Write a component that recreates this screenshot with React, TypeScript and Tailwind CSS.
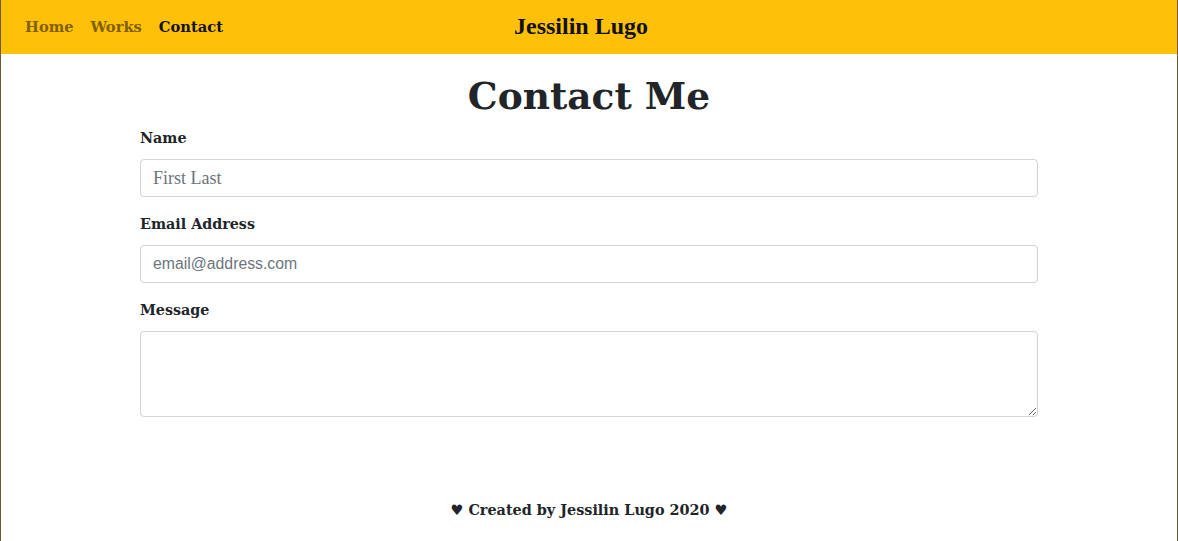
import React from "react";

const serif = { fontFamily: '"DejaVu Serif", "Liberation Serif", serif' };

export default function App() {
  return (
    <div className="min-h-[541px] bg-white border-x border-[#6f5a30] flex flex-col" style={serif}>
      <nav className="h-[54px] bg-[#ffc107] flex items-center px-[24px] relative">
        <div className="flex items-center gap-[17px] text-[14.7px] font-bold">
          <a className="text-[#806000]">Home</a>
          <a className="text-[#806000]">Works</a>
          <a className="text-[#111]">Contact</a>
        </div>
        <div
          className="absolute left-[calc(50%-8px)] -translate-x-1/2 top-[11px] text-[24px] leading-[30px] font-bold text-[#111]"
          style={{ fontFamily: '"Liberation Serif", "DejaVu Serif", serif' }}
        >
          Jessilin Lugo
        </div>
      </nav>
      <main className="flex-1 flex flex-col items-center">
        <h1 className="text-[37.5px] font-bold text-[#212529] leading-[48px] pt-[18px]">Contact Me</h1>
        <form className="w-[898px] flex flex-col">
          <label className="text-[14.3px] font-bold text-[#212529] mt-[7px] leading-[22px]">Name</label>
          <input
            className="mt-[10px] h-[38px] border border-[#ced4da] rounded-[4px] px-[12px] text-[18px] placeholder:text-[#6c757d] outline-none"
            style={{ fontFamily: '"Liberation Serif", serif' }}
            placeholder="First Last"
          />
          <label className="text-[14.3px] font-bold text-[#212529] mt-[16px] leading-[22px]">Email Address</label>
          <input
            className="mt-[10px] h-[38px] border border-[#ced4da] rounded-[4px] px-[12px] text-[15.8px] placeholder:text-[#6c757d] outline-none"
            style={{ fontFamily: '"Liberation Sans", Arial, sans-serif' }}
            placeholder="email@address.com"
          />
          <label className="text-[14.3px] font-bold text-[#212529] mt-[16px] leading-[22px]">Message</label>
          <textarea
            className="mt-[10px] h-[86px] border border-[#ced4da] rounded-[4px] px-[12px] py-[6px] text-[16px] outline-none"
          />
        </form>
      </main>
      <footer className="text-center text-[14.4px] font-bold text-[#212529] pb-[20px]">
        ♥ Created by Jessilin Lugo 2020 ♥
      </footer>
    </div>
  );
}
